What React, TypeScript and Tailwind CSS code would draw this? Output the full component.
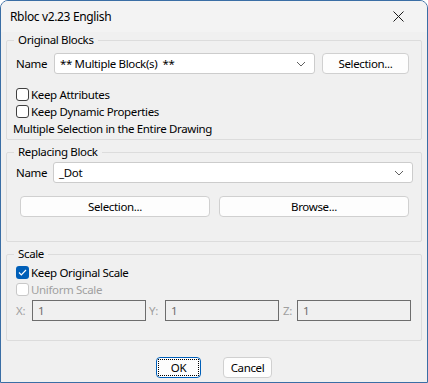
import React from "react";

const font = { fontFamily: '"Noto Sans", "Liberation Sans", sans-serif' };

const Chevron = () => (
  <svg width="10" height="6" viewBox="0 0 10 6" className="text-[#606060]">
    <path d="M1 1 L5 5 L9 1" fill="none" stroke="currentColor" strokeWidth="1" />
  </svg>
);

const Check = ({ checked, disabled }: { checked?: boolean; disabled?: boolean }) =>
  checked ? (
    <span className="flex h-[13px] w-[13px] items-center justify-center rounded-[3px] bg-[#005fb8]">
      <svg width="9" height="7" viewBox="0 0 9 7">
        <path d="M1 3.5 L3.3 5.8 L8 1" fill="none" stroke="white" strokeWidth="1.2" />
      </svg>
    </span>
  ) : (
    <span
      className={
        "h-[13px] w-[13px] rounded-[3px] border bg-white " +
        (disabled ? "border-[#c8c8c8] bg-[#f6f6f6]" : "border-[#404040]")
      }
    />
  );

const Btn = ({ children, className }: { children: React.ReactNode; className?: string }) => (
  <button
    className={
      "flex h-[21px] items-center justify-center rounded-[4px] border border-[#d0d0d0] bg-[#fdfdfd] text-black " +
      (className || "")
    }
  >
    {children}
  </button>
);

const Combo = ({ value, className }: { value: React.ReactNode; className?: string }) => (
  <div
    className={
      "flex h-[21px] items-center justify-between rounded-[3px] border border-[#cccccc] bg-white pl-[5px] pr-[8px] " +
      (className || "")
    }
  >
    <span>{value}</span>
    <Chevron />
  </div>
);

const Group = ({ title, children, className }: { title: string; children: React.ReactNode; className?: string }) => (
  <fieldset className={"mx-0 rounded-[2px] border border-[#dcdcdc] " + (className || "")}>
    <legend className="ml-[7px] px-[4px] leading-[16px]">{title}</legend>
    {children}
  </fieldset>
);

const ScaleBox = ({ label, w }: { label: string; w: string }) => (
  <div className="flex items-center">
    <span className={w + " text-[#a0a0a0]"}>{label}</span>
    <div className="flex h-[21px] w-[114px] items-center border border-[#6d6d6d] bg-[#f0f0f0] pl-[5px] text-[#6d6d6d]">
      1
    </div>
  </div>
);

export default function App() {
  return (
    <div
      style={font}
      className="h-[383px] w-[428px] overflow-hidden rounded-t-[8px] border border-[#3a6ea5] bg-[#f0f0f0] text-[11.5px] tracking-[-0.35px] text-black"
    >
      <div className="flex h-[31px] items-center justify-between bg-[#f3f3f3] pl-[9px] pr-[23px]">
        <span className="text-[12px]">Rbloc v2.23 English</span>
        <svg width="11" height="11" viewBox="0 0 11 11">
          <path d="M0.5 0.5 L10.5 10.5 M10.5 0.5 L0.5 10.5" stroke="#1a1a1a" strokeWidth="1" />
        </svg>
      </div>

      <div className="flex flex-col pl-[5px] pr-[5px]">
        <Group title="Original Blocks" className="h-[108px]">
          <div className="mt-[5px] flex items-center pl-[9px]">
            <span className="w-[38px]">Name</span>
            <Combo className="w-[261px]" value={"** Multiple Block(s)\u00a0\u00a0**"} />
            <Btn className="ml-[7px] w-[87px]">Selection...</Btn>
          </div>
          <div className="mt-[12px] flex flex-col pl-[9px]">
            <label className="flex h-[17px] items-center gap-[2px]">
              <Check />
              Keep Attributes
            </label>
            <label className="flex h-[17px] items-center gap-[2px]">
              <Check />
              Keep Dynamic Properties
            </label>
            <span className="-ml-[3px] flex h-[17px] items-center">Multiple Selection in the Entire Drawing</span>
          </div>
        </Group>

        <Group title="Replacing Block" className="mt-[4px] h-[98px]">
          <div className="mt-[2px] flex items-center pl-[9px]">
            <span className="w-[37px]">Name</span>
            <Combo className="w-[360px]" value="_Dot" />
          </div>
          <div className="mt-[13px] flex gap-[9px] pl-[13px]">
            <Btn className="w-[190px]">Selection...</Btn>
            <Btn className="w-[190px]">Browse...</Btn>
          </div>
        </Group>

        <Group title="Scale" className="mt-[4px] h-[95px]">
          <div className="mt-[2px] flex flex-col pl-[9px]">
            <label className="flex h-[17px] items-center gap-[2px]">
              <Check checked />
              Keep Original Scale
            </label>
            <label className="flex h-[17px] items-center gap-[2px] text-[#a0a0a0]">
              <Check disabled />
              Uniform Scale
            </label>
          </div>
          <div className="mt-[2px] flex gap-[3px] pl-[9px]">
            <ScaleBox label="X:" w="w-[16px]" />
            <ScaleBox label="Y:" w="w-[16px]" />
            <ScaleBox label="Z:" w="w-[15px] pl-[1px]" />
          </div>
        </Group>

        <div className="mt-[16px] flex justify-center gap-[22px]">
          <button className="flex h-[21px] w-[45px] items-center justify-center rounded-[4px] border border-[#005fb8] bg-[#fdfdfd]">
            <span className="flex h-[17px] w-[41px] items-center justify-center border border-dotted border-black">OK</span>
          </button>
          <Btn className="w-[49px]">Cancel</Btn>
        </div>
      </div>
    </div>
  );
}
